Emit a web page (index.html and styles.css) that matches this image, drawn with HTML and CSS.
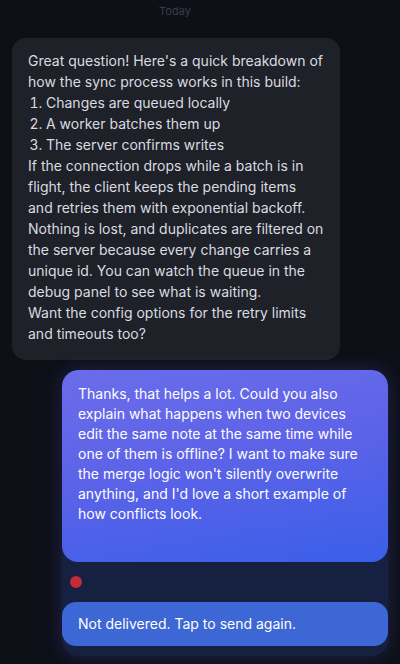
FILE: index.html
```html
<!DOCTYPE html>
<html lang="en">
<head>
<meta charset="utf-8">
<title>Chat</title>
<link rel="stylesheet" href="styles.css">
</head>
<body>
<div class="screen">
  <div class="day">Today</div>

  <div class="assistant">
    <p>Great question! Here's a quick breakdown of how the sync process works in this build:</p>
    <ol class="steps">
      <li>Changes are queued locally</li>
      <li>A worker batches them up</li>
      <li>The server confirms writes</li>
    </ol>
    <p>If the connection drops while a batch is in flight, the client keeps the pending items and retries them with exponential backoff. Nothing is lost, and duplicates are filtered on the server because every change carries a unique id. You can watch the queue in the debug panel to see what is waiting.</p>
    <p>Want the config options for the retry limits and timeouts too?</p>
  </div>

  <div class="group">
    <div class="bubble">
      Thanks, that helps a lot. Could you also explain what happens when two devices edit the same note at the same time while one of them is offline? I want to make sure the merge logic won't silently overwrite anything, and I'd love a short example of how conflicts look.
    </div>
    <div class="meta">
      <span class="dot"></span>
    </div>
    <div class="bar">Not delivered. Tap to send again.</div>
  </div>
</div>
</body>
</html>
```

FILE: styles.css
```css
html, body {
  margin: 0;
  padding: 0;
  background: #0d1017;
}

body {
  font-family: "Inter", "Noto Sans", "Liberation Sans", sans-serif;
  width: 400px;
  height: 664px;
  overflow: hidden;
}

.screen {
  display: flex;
  flex-direction: column;
  padding: 4px 12px 0 12px;
}

.day {
  align-self: center;
  margin-left: -50px;
  font-size: 11px;
  line-height: 14px;
  color: #3a3e47;
  height: 34px;
}

.assistant {
  width: 296px;
  margin-right: 60px;
  background: #1f2128;
  border-radius: 14px;
  padding: 12px 16px 16px 16px;
  color: #d9dbe1;
  font-size: 14px;
  line-height: 21px;
}

.assistant p {
  margin: 0;
}

.steps {
  margin: 0;
  padding-left: 18px;
  width: 220px;
}

.group {
  margin-top: 10px;
  margin-left: 50px;
  background: #162041;
  border-radius: 16px;
  overflow: hidden;
  box-shadow: 0 0 18px rgba(86, 84, 220, 0.28);
  display: flex;
  flex-direction: column;
}

.bubble {
  background: linear-gradient(170deg, #6a6cea 0%, #5d63e8 45%, #3a5fe9 100%);
  color: #ffffff;
  font-size: 14px;
  line-height: 20px;
  padding: 14px 16px;
  height: 164px;
  border-radius: 16px;
}

.meta {
  height: 40px;
  display: flex;
  align-items: center;
  padding-left: 8px;
}

.dot {
  width: 12px;
  height: 12px;
  border-radius: 50%;
  background: #c62b3a;
}

.bar {
  background: #3c67d4;
  color: #ffffff;
  font-size: 14px;
  line-height: 20px;
  padding: 12px 16px;
  border-radius: 14px;
  margin-bottom: 10px;
}
```
